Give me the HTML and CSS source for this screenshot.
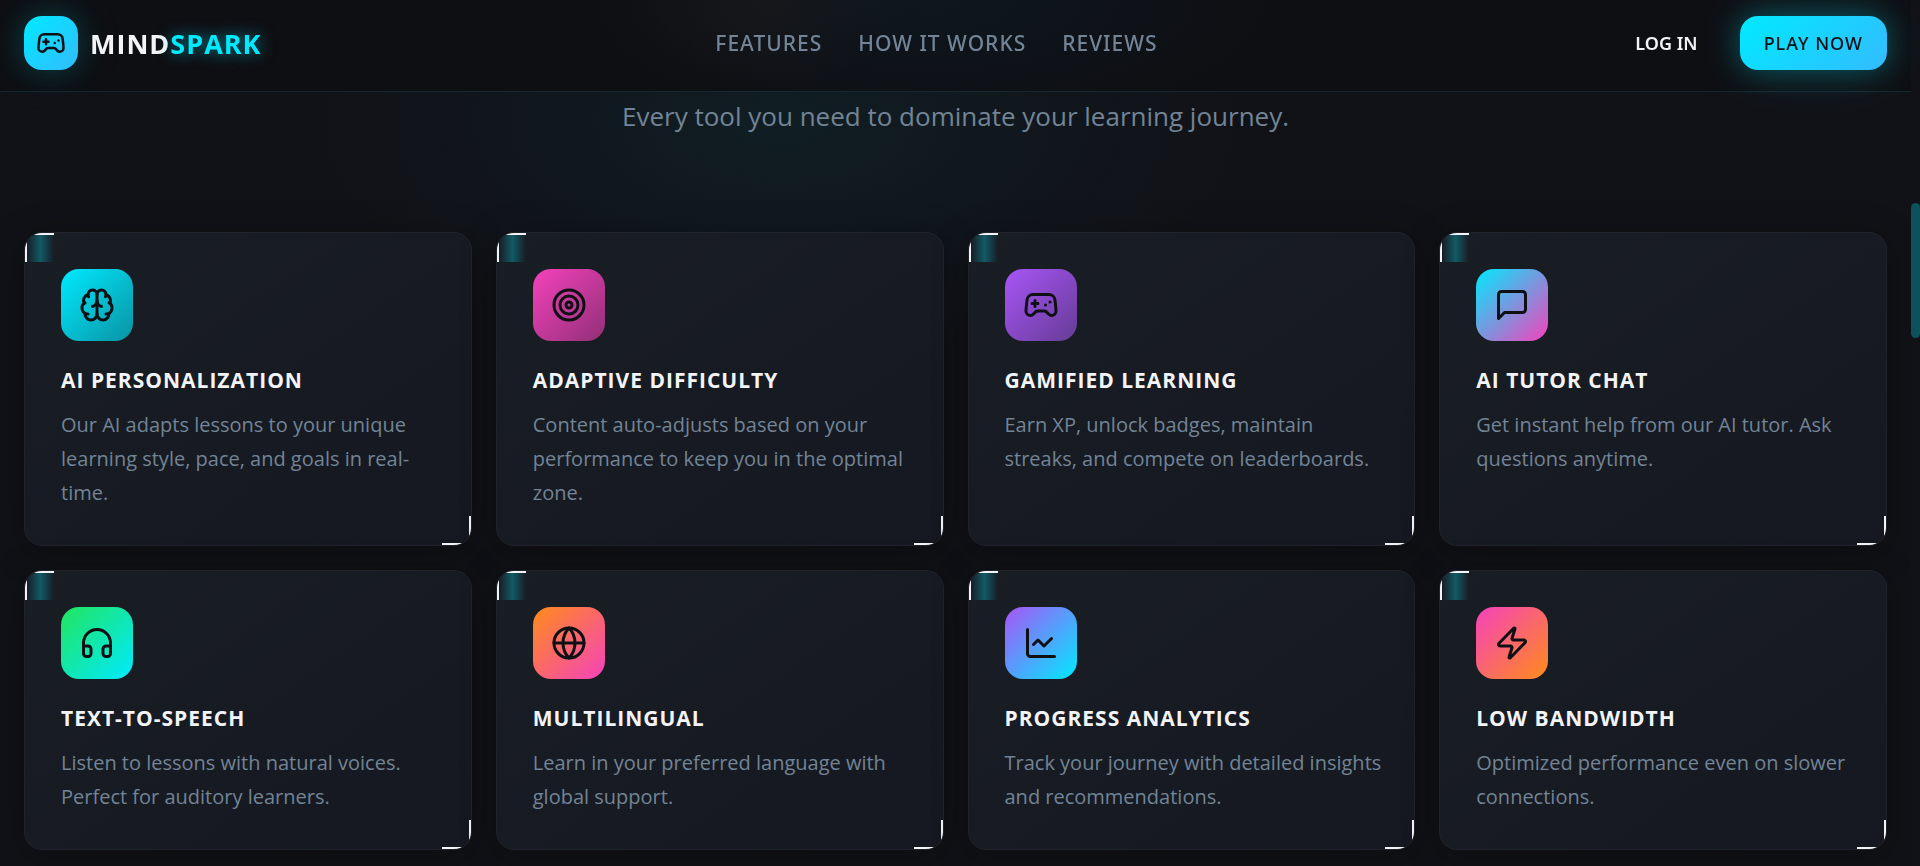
FILE: index.html
```
<!DOCTYPE html>
<html lang="en">

<head>
    <meta charset="UTF-8">
    <meta name="viewport" content="width=device-width, initial-scale=1.0">
    <title>MindSpark</title>
    <link rel="stylesheet" href="styles.css">
</head>

<body>
    <header class="navbar">
        <a class="logo" href="#">
            <span class="logo-icon">
                <svg class="icon-small" viewBox="0 0 24 24">
                    <path d="M6 11h4M8 9v4M15 12h.01M18 10h.01" />
                    <path d="M17.32 5H6.68a4 4 0 0 0-3.978 3.59c-.006.052-.01.101-.017.152C2.604 9.416 2 14.456 2 16a3 3 0 0 0 3 3c1 0 1.5-.5 2-1l1.414-1.414A2 2 0 0 1 9.828 16h4.344a2 2 0 0 1 1.414.586L17 18c.5.5 1 1 2 1a3 3 0 0 0 3-3c0-1.545-.604-6.584-.685-7.258-.007-.05-.011-.1-.017-.151A4 4 0 0 0 17.32 5z" />
                </svg>
            </span>
            <span class="logo-text">MIND<span class="neon">SPARK</span></span>
        </a>
        <nav class="nav-links">
            <a href="#features">FEATURES</a>
            <a href="#how">HOW IT WORKS</a>
            <a href="#reviews">REVIEWS</a>
        </nav>
        <div class="nav-actions">
            <button class="btn-login" type="button">LOG IN</button>
            <button class="btn-play" type="button">PLAY NOW</button>
        </div>
    </header>

    <main class="features" id="features">
        <p class="subtitle">Every tool you need to dominate your learning journey.</p>

        <div class="grid">
            <article class="card">
                <div class="card-icon cyan">
                    <svg class="icon" viewBox="0 0 24 24">
                        <path d="M12 18V5" />
                        <path d="M15 13a4.17 4.17 0 0 1-3-4 4.17 4.17 0 0 1-3 4" />
                        <path d="M17.598 6.5A3 3 0 1 0 12 5a3 3 0 1 0-5.598 1.5" />
                        <path d="M17.997 5.125a4 4 0 0 1 2.526 5.77" />
                        <path d="M18 18a4 4 0 0 0 2-7.464" />
                        <path d="M19.967 17.483A4 4 0 1 1 12 18a4 4 0 1 1-7.967-.517" />
                        <path d="M6 18a4 4 0 0 1-2-7.464" />
                        <path d="M6.003 5.125a4 4 0 0 0-2.526 5.77" />
                    </svg>
                </div>
                <h3>AI PERSONALIZATION</h3>
                <p>Our AI adapts lessons to your unique learning style, pace, and goals in real-time.</p>
            </article>

            <article class="card">
                <div class="card-icon magenta">
                    <svg class="icon" viewBox="0 0 24 24">
                        <circle cx="12" cy="12" r="10" />
                        <circle cx="12" cy="12" r="6" />
                        <circle cx="12" cy="12" r="2" />
                    </svg>
                </div>
                <h3>ADAPTIVE DIFFICULTY</h3>
                <p>Content auto-adjusts based on your performance to keep you in the optimal zone.</p>
            </article>

            <article class="card">
                <div class="card-icon purple">
                    <svg class="icon" viewBox="0 0 24 24">
                        <path d="M6 11h4M8 9v4M15 12h.01M18 10h.01" />
                        <path d="M17.32 5H6.68a4 4 0 0 0-3.978 3.59c-.006.052-.01.101-.017.152C2.604 9.416 2 14.456 2 16a3 3 0 0 0 3 3c1 0 1.5-.5 2-1l1.414-1.414A2 2 0 0 1 9.828 16h4.344a2 2 0 0 1 1.414.586L17 18c.5.5 1 1 2 1a3 3 0 0 0 3-3c0-1.545-.604-6.584-.685-7.258-.007-.05-.011-.1-.017-.151A4 4 0 0 0 17.32 5z" />
                    </svg>
                </div>
                <h3>GAMIFIED LEARNING</h3>
                <p>Earn XP, unlock badges, maintain streaks, and compete on leaderboards.</p>
            </article>

            <article class="card">
                <div class="card-icon cyan-magenta">
                    <svg class="icon" viewBox="0 0 24 24">
                        <path d="M21 15a2 2 0 0 1-2 2H7l-4 4V5a2 2 0 0 1 2-2h14a2 2 0 0 1 2 2z" />
                    </svg>
                </div>
                <h3>AI TUTOR CHAT</h3>
                <p>Get instant help from our AI tutor. Ask questions anytime.</p>
            </article>

            <article class="card">
                <div class="card-icon green-cyan">
                    <svg class="icon" viewBox="0 0 24 24">
                        <path d="M3 14h3a2 2 0 0 1 2 2v3a2 2 0 0 1-2 2H5a2 2 0 0 1-2-2v-7a9 9 0 0 1 18 0v7a2 2 0 0 1-2 2h-1a2 2 0 0 1-2-2v-3a2 2 0 0 1 2-2h3" />
                    </svg>
                </div>
                <h3>TEXT-TO-SPEECH</h3>
                <p>Listen to lessons with natural voices. Perfect for auditory learners.</p>
            </article>

            <article class="card">
                <div class="card-icon orange-magenta">
                    <svg class="icon" viewBox="0 0 24 24">
                        <circle cx="12" cy="12" r="10" />
                        <path d="M12 2a14.5 14.5 0 0 0 0 20 14.5 14.5 0 0 0 0-20" />
                        <path d="M2 12h20" />
                    </svg>
                </div>
                <h3>MULTILINGUAL</h3>
                <p>Learn in your preferred language with global support.</p>
            </article>

            <article class="card">
                <div class="card-icon purple-cyan">
                    <svg class="icon" viewBox="0 0 24 24">
                        <path d="M3 3v16a2 2 0 0 0 2 2h16" />
                        <path d="m19 9-5 5-4-4-3 3" />
                    </svg>
                </div>
                <h3>PROGRESS ANALYTICS</h3>
                <p>Track your journey with detailed insights and recommendations.</p>
            </article>

            <article class="card">
                <div class="card-icon magenta-orange">
                    <svg class="icon" viewBox="0 0 24 24">
                        <path d="M4 14a1 1 0 0 1-.78-1.63l9.9-10.2a.5.5 0 0 1 .86.46l-1.92 6.02A1 1 0 0 0 13 10h7a1 1 0 0 1 .78 1.63l-9.9 10.2a.5.5 0 0 1-.86-.46l1.92-6.02A1 1 0 0 0 11 14z" />
                    </svg>
                </div>
                <h3>LOW BANDWIDTH</h3>
                <p>Optimized performance even on slower connections.</p>
            </article>
        </div>
    </main>

    <!-- page scrollbar -->
    <div class="scroll-track">
        <div class="scroll-thumb"></div>
    </div>
</body>

</html>
```

FILE: styles.css
```
*,
*::before,
*::after {
    box-sizing: border-box;
    margin: 0;
    padding: 0;
}

body {
    background-color: #111217;
    color: #f2f4f8;
    font-family: "Segoe UI", "Open Sans", sans-serif;
    min-height: 100vh;
    padding-right: 9px; /* room for the scrollbar */
    overflow: hidden;
}

/* Header */
.navbar {
    position: sticky;
    top: 0;
    z-index: 10;
    display: flex;
    justify-content: space-between;
    align-items: center;
    padding: 16px 24px 21px;
    background-color: #0e0f13;
    background-image:
        radial-gradient(ellipse 150px 90px at 760px 0, rgba(40, 34, 32, 0.3), transparent),
        radial-gradient(ellipse 340px 130px at 930px 0, rgba(14, 34, 48, 0.4), transparent);
    border-bottom: 1px solid #13292f;
}

.logo {
    display: flex;
    align-items: center;
    gap: 12px;
    color: #f2f4f8;
    text-decoration: none;
}

.logo-icon {
    display: flex;
    align-items: center;
    justify-content: center;
    width: 54px;
    height: 54px;
    border-radius: 18px;
    background: linear-gradient(135deg, #00eaff, #33bbff);
    box-shadow: 0 0 30px rgba(0, 234, 255, 0.2), 0 0 60px rgba(0, 234, 255, 0.08);
}

.logo-text {
    font-size: 27px;
    font-weight: 700;
    letter-spacing: 1px;
}

.neon {
    color: #00eaff;
    text-shadow: 0 0 15px rgba(0, 234, 255, 0.5), 0 0 30px rgba(0, 234, 255, 0.2);
}

.nav-links {
    display: flex;
    gap: 36px;
}

.nav-links a {
    color: #728496;
    font-family: "Segoe UI", "Noto Sans", sans-serif;
    font-size: 21px;
    font-weight: 500;
    letter-spacing: 1px;
    text-decoration: none;
}

.nav-actions {
    display: flex;
    gap: 18px;
}

.btn-login,
.btn-play {
    height: 54px;
    padding: 0 24px;
    border: none;
    border-radius: 18px;
    font-family: "Segoe UI", "Noto Sans", sans-serif;
    font-size: 18px;
    cursor: pointer;
}

.btn-login {
    background: transparent;
    color: #f2f4f8;
    font-weight: 600;
}

.btn-play {
    background: linear-gradient(135deg, #00eaff, #33bbff);
    color: #0f1014;
    font-weight: 500;
    letter-spacing: 1px;
    box-shadow: 0 0 30px rgba(0, 234, 255, 0.3), 0 0 60px rgba(0, 234, 255, 0.12);
}

/* Icons */
.icon,
.icon-small {
    width: 36px;
    height: 36px;
    fill: none;
    stroke: #0f1014;
    stroke-width: 2;
    stroke-linecap: round;
    stroke-linejoin: round;
}

.icon-small {
    width: 30px;
    height: 30px;
}

/* Features */
.features {
    padding: 6px 24px 12px;
    background: radial-gradient(ellipse 460px 240px at 780px 30px, rgba(15, 42, 48, 0.5), rgba(15, 34, 44, 0.25) 60%, transparent);
}

.subtitle {
    color: #728496;
    font-size: 26px;
    line-height: 36px;
    text-align: center;
    margin-bottom: 98px;
}

.grid {
    display: grid;
    grid-template-columns: repeat(4, 1fr);
    gap: 24px;
}

.card {
    position: relative;
    overflow: hidden;
    padding: 36px 30px 35px 36px;
    border: 1px solid #20242a;
    border-radius: 18px;
    background: linear-gradient(145deg, #191d24, #151820);
    box-shadow: 0 6px 36px rgba(0, 0, 0, 0.3);
}

/* corner brackets */
.card::before,
.card::after {
    content: "";
    position: absolute;
    width: 29px;
    height: 29px;
}

.card::before {
    top: 0;
    left: 0;
    border-top: 2px solid #f2f4f8;
    border-left: 2px solid #f2f4f8;
    background: linear-gradient(90deg, transparent, rgba(0, 234, 255, 0.3), transparent);
}

.card::after {
    right: 0;
    bottom: 0;
    border-right: 2px solid #f2f4f8;
    border-bottom: 2px solid #f2f4f8;
}

.card-icon {
    display: flex;
    align-items: center;
    justify-content: center;
    width: 72px;
    height: 72px;
    border-radius: 18px;
    margin-bottom: 24px;
}

.cyan { background: linear-gradient(135deg, #00eaff, #0a93a3); }
.magenta { background: linear-gradient(135deg, #f542bc, #913077); }
.purple { background: linear-gradient(135deg, #a855f7, #663c96); }
.cyan-magenta { background: linear-gradient(135deg, #00eaff, #f542bc); }
.green-cyan { background: linear-gradient(135deg, #22e55e, #00eaff); }
.orange-magenta { background: linear-gradient(135deg, #ff8c1a, #f542bc); }
.purple-cyan { background: linear-gradient(135deg, #a855f7, #00eaff); }
.magenta-orange { background: linear-gradient(135deg, #f542bc, #ff8c1a); }

.card h3 {
    font-size: 21px;
    font-weight: 700;
    line-height: 31px;
    letter-spacing: 1px;
    margin-bottom: 12px;
}

.card p {
    color: #728496;
    font-size: 20px;
    line-height: 34px;
}

/* Scrollbar */
.scroll-track {
    position: fixed;
    top: 0;
    right: 0;
    bottom: 0;
    width: 9px;
    background: #111217;
}

.scroll-thumb {
    height: 135px;
    margin-top: 203px;
    border-radius: 5px;
    background: #0b525b;
}
```
